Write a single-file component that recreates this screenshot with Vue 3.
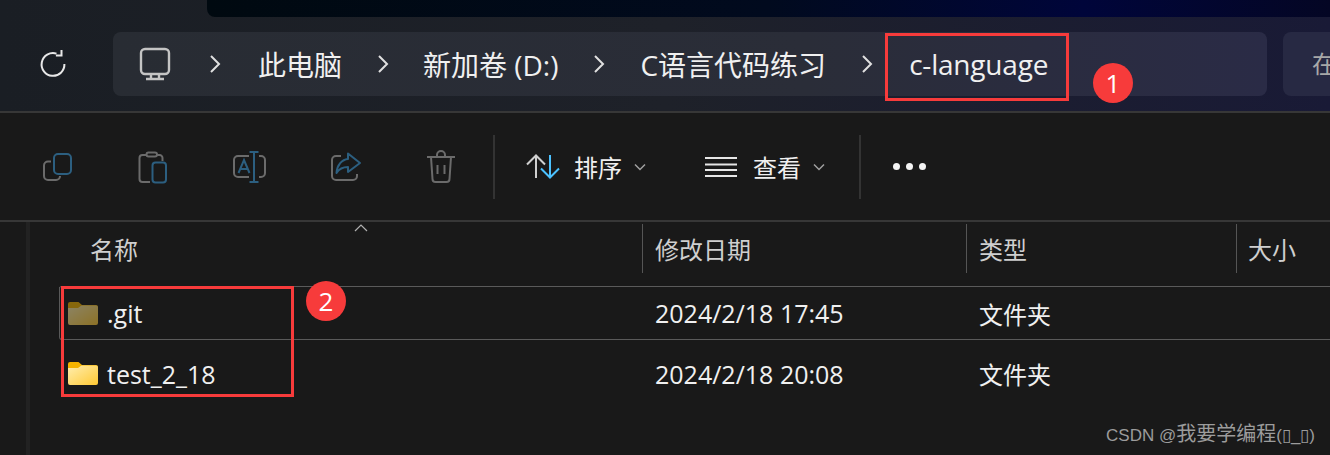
<script setup>
const crumbs = [
  { label: '此电脑', gap: 37 },
  { label: '新加卷 (D:)', gap: 34 },
  { label: 'C语言代码练习', gap: 35 },
  { label: 'c-language', gap: 36 }
]

const rows = [
  { name: '.git', date: '2024/2/18 17:45', type: '文件夹', hidden: true },
  { name: 'test_2_18', date: '2024/2/18 20:08', type: '文件夹', hidden: false }
]
</script>

<template>
  <div class="explorer">
    <header class="topbar">
      <div class="notch" />
      <div class="nav">
        <svg class="refresh" width="28" height="28" viewBox="0 0 28 28" fill="none" stroke="#e8e8e8" stroke-width="2">
          <path d="M17.5 3.6A11.4 11.4 0 1 0 25.4 14" />
          <path d="M18.5 -1v5.6h-5.6" transform="translate(4 1)" />
        </svg>
        <div class="address">
          <svg class="pc" width="32" height="34" viewBox="0 0 32 34" fill="none" stroke="#c4c4c4" stroke-width="2.4">
            <rect x="2" y="2" width="28" height="25" rx="4" />
            <path d="M12 27v5M20 27v5M7 32h18" />
          </svg>
          <template v-for="crumb in crumbs" :key="crumb.label">
            <svg class="chev" :style="{ marginRight: crumb.gap + 'px' }" width="12" height="18" viewBox="0 0 12 18" fill="none" stroke="#e0e0e0" stroke-width="2">
              <path d="M2 1l8 8-8 8" />
            </svg>
            <span class="crumb">{{ crumb.label }}</span>
          </template>
        </div>
        <div class="search">在</div>
      </div>
    </header>

    <div class="toolbar">
      <div class="tool">
        <svg width="34" height="34" viewBox="0 0 34 34" fill="none" stroke-width="2">
          <path stroke="#6b6b6b" d="M11 11.5H8a4 4 0 0 0-4 4V26a4 4 0 0 0 4 4h8a4 4 0 0 0 4-4" />
          <rect stroke="#2c5f80" x="14" y="4" width="17" height="20" rx="4" />
        </svg>
      </div>
      <div class="tool">
        <svg width="34" height="34" viewBox="0 0 34 34" fill="none" stroke-width="2">
          <path stroke="#6b6b6b" d="M10 5H6.500a3 3 0 0 0-3 3v21a3 3 0 0 0 3 3H14M21 5h2.500a3 3 0 0 1 3 3v3" />
          <rect stroke="#6b6b6b" x="10.500" y="2.500" width="10.500" height="4" rx="2" />
          <rect stroke="#2c5f80" x="16.500" y="12.500" width="13.500" height="20" rx="3" />
        </svg>
      </div>
      <div class="tool">
        <svg width="34" height="34" viewBox="0 0 34 34" fill="none" stroke-width="2">
          <path stroke="#6b6b6b" d="M17 6H6a4 4 0 0 0-4 4v13a4 4 0 0 0 4 4h11M27 6h2a4 4 0 0 1 4 4v13a4 4 0 0 1-4 4h-2" />
          <path stroke="#2c5f80" d="M22 2v30M17.500 2h9M17.500 32h9M6.500 23l5.500-13 5.500 13M8.500 19h7" />
        </svg>
      </div>
      <div class="tool">
        <svg width="34" height="34" viewBox="0 0 34 34" fill="none" stroke-width="2">
          <path stroke="#6b6b6b" d="M13 6H8a4 4 0 0 0-4 4v16a4 4 0 0 0 4 4h17a4 4 0 0 0 4-4v-2" />
          <path stroke="#2c5f80" stroke-linejoin="round" d="M20 3.500L32 13l-12 9v-5c-5 0-9 2-11.500 6C9 15 14 9.500 20 9z" />
        </svg>
      </div>
      <div class="tool">
        <svg width="34" height="34" viewBox="0 0 34 34" fill="none" stroke="#6b6b6b" stroke-width="2">
          <path d="M3 7h28M13 7V5a3.500 3.500 0 0 1 8 0v2M7 7l1.500 22a3 3 0 0 0 3 3h11a3 3 0 0 0 3-3L27 7M13.500 15v9M20.500 15v9" />
        </svg>
      </div>
      <div class="vline first" />
      <div class="action sort">
        <svg width="34" height="26" viewBox="0 0 34 26" fill="none" stroke-width="2">
          <path stroke="#d0d0d0" d="M10 24V1.500M1 10.500L10 1.500l9 9" />
          <path stroke="#4cc2ff" d="M24 1v22.500M15 14.500l9 9 9-9" />
        </svg>
        <span class="action-label">排序</span>
        <svg class="caret" width="12" height="8" viewBox="0 0 12 8" fill="none" stroke="#a0a0a0" stroke-width="1.500">
          <path d="M1 1.500l5 5 5-5" />
        </svg>
      </div>
      <div class="action view">
        <svg width="32" height="22" viewBox="0 0 32 22" fill="none" stroke="#e6e6e6" stroke-width="2">
          <path d="M0 2h32M0 8.500h32M0 14h32M0 20h32" />
        </svg>
        <span class="action-label wide">查看</span>
        <svg class="caret" width="12" height="8" viewBox="0 0 12 8" fill="none" stroke="#a0a0a0" stroke-width="1.500">
          <path d="M1 1.500l5 5 5-5" />
        </svg>
      </div>
      <div class="vline second" />
      <div class="dots"><i /><i /><i /></div>
    </div>

    <main class="body">
      <div class="rail" />
      <div class="list">
        <div class="head">
          <div class="hcell name">名称<svg class="up" width="14" height="8" viewBox="0 0 14 8" fill="none" stroke="#b0b0b0" stroke-width="1.200"><path d="M1 7l6-6 6 6" /></svg></div>
          <div class="hcell sep">修改日期</div>
          <div class="hcell sep">类型</div>
          <div class="hcell sep last">大小</div>
        </div>
        <div class="rows">
          <div v-for="row in rows" :key="row.name" class="row">
            <div class="cell name">
              <svg class="folder" :class="{ faded: row.hidden }" width="30" height="23" viewBox="0 0 30 23">
                <defs>
                  <linearGradient :id="'f' + row.name.length" x1="0" y1="0" x2="1" y2="1">
                    <stop offset="0" stop-color="#ffeeb0" />
                    <stop offset="1" stop-color="#ffc933" />
                  </linearGradient>
                </defs>
                <path fill="#f5b400" d="M2 0h8.500l3.500 3h14a2 2 0 0 1 2 2v4H0V2a2 2 0 0 1 2-2z" />
                <path :fill="'url(#f' + row.name.length + ')'" d="M0 6h10l3.500-2.500H28a2 2 0 0 1 2 2V21a2 2 0 0 1-2 2H2a2 2 0 0 1-2-2z" />
              </svg>
              <span>{{ row.name }}</span>
            </div>
            <div class="cell date">{{ row.date }}</div>
            <div class="cell type">{{ row.type }}</div>
            <div class="cell" />
          </div>
        </div>
      </div>
    </main>

    <!-- 标注 -->
    <div class="mark box-one" />
    <div class="mark box-two" />
    <div class="badge badge-one">1</div>
    <div class="badge badge-two">2</div>
    <div class="watermark">CSDN @<span class="wm-cjk">我要学编程</span>(▯_▯)</div>
  </div>
</template>

<style scoped>
.explorer {
  position: relative;
  width: 1330px;
  height: 455px;
  overflow: hidden;
  background: #191919;
  color: #f0f0f0;
  font-family: "Open Sans", "Noto Sans CJK SC", sans-serif;
}

.topbar {
  height: 111px;
  border-bottom: 2px solid #373737;
  background: linear-gradient(90deg, #1a1e24 0%, #1e2129 50%, #191a36 100%);
}

.notch {
  height: 17px;
  margin-left: 207px;
  border-bottom-left-radius: 8px;
  background: linear-gradient(90deg, #000910 0%, #010a1e 50%, #00053a 78%, #040624 100%);
}

.nav {
  display: flex;
  align-items: stretch;
  height: 64px;
  margin-top: 15px;
  padding-left: 39px;
}

.refresh {
  flex: none;
  align-self: center;
  margin-right: 46px;
}

.address {
  flex: none;
  display: flex;
  align-items: center;
  width: 1154px;
  padding-left: 26px;
  box-sizing: border-box;
  border-radius: 8px;
  background: linear-gradient(90deg, #282c33 0%, #2a2d38 60%, #2a2b46 100%);
}

.pc {
  flex: none;
  margin-right: 38px;
}

.chev {
  flex: none;
}

.crumb {
  margin-right: 35px;
  font-size: 28px;
  white-space: nowrap;
}

.crumb:last-child {
  letter-spacing: -0.2px;
}

.search {
  flex: 1;
  margin-left: 16px;
  padding-left: 29px;
  border-radius: 8px 0 0 8px;
  background: #272943;
  color: #a8a8a8;
  font-size: 24px;
  line-height: 64px;
}

.toolbar {
  display: flex;
  align-items: center;
  height: 107px;
  padding-left: 9px;
  border-bottom: 2px solid #373737;
}

.tool {
  display: flex;
  justify-content: center;
  width: 96px;
}

.vline {
  width: 2px;
  height: 64px;
  background: #333;
}

.vline.first {
  margin-left: 4px;
}

.action {
  display: flex;
  align-items: center;
}

.sort {
  margin-left: 31px;
}

.view {
  margin-left: 59px;
}

.action-label {
  margin-left: 14px;
  padding-top: 3px;
  font-size: 24px;
  line-height: 32px;
}

.action-label.wide {
  margin-left: 16px;
}

.caret {
  margin-left: 12px;
}

.vline.second {
  margin-left: 34px;
}

.dots {
  display: flex;
  gap: 6px;
  margin-left: 32px;
}

.dots i {
  display: block;
  width: 7px;
  height: 7px;
  border-radius: 50%;
  background: #f4f4f4;
}

.body {
  display: flex;
  height: 233px;
}

.rail {
  width: 4px;
  margin: 0 29px 0 26px;
  background: #222;
}

.list {
  flex: 1;
}

.head,
.row {
  display: grid;
  grid-template-columns: 583px 324px 270px 1fr;
}

.head {
  height: 62px;
  padding-top: 2px;
  color: #cfcfcf;
  font-size: 24px;
}

.hcell {
  position: relative;
  height: 49px;
  line-height: 51px;
  padding-left: 12px;
}

.hcell.name {
  padding-left: 31px;
}

.hcell.sep {
  border-left: 1px solid #555;
}

.hcell.last {
  padding-left: 11px;
}

.up {
  position: absolute;
  left: 295px;
  top: 0;
}

.rows {
  border-top: 1px solid #5a5a5a;
  border-top-left-radius: 3px;
}

.row {
  box-sizing: border-box;
  height: 53px;
  align-items: center;
  font-size: 25px;
}

.row:first-child {
  border-bottom: 1px solid #5a5a5a;
  box-shadow: inset 1px 0 0 #5a5a5a;
  border-radius: 0 0 0 3px;
}

.row:last-child {
  height: 74px;
  padding-bottom: 7px;
}

.cell {
  padding-left: 13px;
  white-space: nowrap;
}

.cell.name {
  display: flex;
  align-items: center;
  padding-left: 9px;
}

.cell.type {
  font-size: 24px;
}

.folder {
  flex: none;
  margin-right: 9px;
}

.folder.faded {
  opacity: 0.5;
}

.mark {
  position: absolute;
  border: 3px solid #f73b3b;
}

.box-one {
  left: 885px;
  top: 33px;
  width: 184px;
  height: 68px;
  box-sizing: border-box;
}

.box-two {
  left: 61px;
  top: 286px;
  width: 233px;
  height: 111px;
  box-sizing: border-box;
}

.badge {
  position: absolute;
  width: 40px;
  height: 40px;
  border-radius: 50%;
  background: #f73b3b;
  color: #fff;
  font-size: 26px;
  line-height: 40px;
  text-align: center;
}

.badge-one {
  left: 1093px;
  top: 63px;
}

.badge-two {
  left: 306px;
  top: 281px;
}

.watermark {
  position: absolute;
  right: 15px;
  top: 421px;
  color: #9c9c9c;
  font-family: "Liberation Sans", "Noto Sans CJK SC", sans-serif;
  font-size: 17px;
  line-height: 26px;
  white-space: nowrap;
}

.wm-cjk {
  font-size: 20px;
}
</style>
